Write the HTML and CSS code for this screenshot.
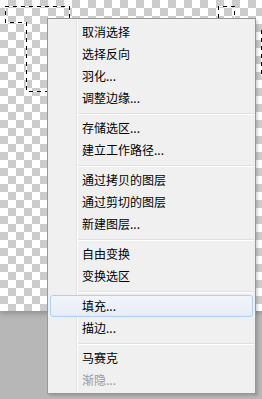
FILE: index.html
```html
<!DOCTYPE html>
<html lang="zh-CN">
<head>
    <meta charset="UTF-8">
    <title>选区菜单</title>
    <link rel="stylesheet" href="styles.css">
</head>
<body>
    <div class="canvas">
        <svg class="ants" width="262" height="311" viewBox="0 0 262 311">
            <g fill="none" stroke="#ffffff" stroke-width="1" shape-rendering="crispEdges">
                <path d="M69.5 18 V6.5 H5.5 V22.5 H26.5 V91.5 H48"/>
                <path d="M218.5 18 V6.5 H234.5 V18"/>
                <path d="M261.5 30 V76"/>
            </g>
            <g fill="none" stroke="#000000" stroke-width="1" stroke-dasharray="4 4" shape-rendering="crispEdges">
                <path d="M69.5 18 V6.5 H5.5 V22.5 H26.5 V91.5 H48"/>
                <path d="M218.5 18 V6.5 H234.5 V18"/>
                <path d="M261.5 30 V76"/>
            </g>
        </svg>
    </div>

    <ul class="menu">
        <li class="item">取消选择</li>
        <li class="item">选择反向</li>
        <li class="item">羽化...</li>
        <li class="item">调整边缘...</li>
        <li class="sep"></li>
        <li class="item">存储选区...</li>
        <li class="item">建立工作路径...</li>
        <li class="sep"></li>
        <li class="item">通过拷贝的图层</li>
        <li class="item">通过剪切的图层</li>
        <li class="item">新建图层...</li>
        <li class="sep"></li>
        <li class="item">自由变换</li>
        <li class="item">变换选区</li>
        <li class="sep"></li>
        <li class="item hover">填充...</li>
        <li class="item">描边...</li>
        <li class="sep"></li>
        <li class="item">马赛克</li>
        <li class="item disabled">渐隐...</li>
    </ul>
</body>
</html>
```

FILE: styles.css
```css
body {
    margin: 0;
    width: 262px;
    height: 399px;
    overflow: hidden;
    background-color: #b7b7b7;
    font-family: "Noto Sans CJK SC", "DejaVu Sans", sans-serif;
    font-size: 12px;
    color: #000000;
}

.canvas {
    position: relative;
    height: 311px;
    background-color: #ffffff;
    background-image:
        linear-gradient(45deg, #cccccc 25%, transparent 25%, transparent 75%, #cccccc 75%),
        linear-gradient(45deg, #cccccc 25%, transparent 25%, transparent 75%, #cccccc 75%);
    background-size: 16px 16px;
    background-position: 0 0, 8px 8px;
    box-shadow: 0 2px 6px rgba(0, 0, 0, 0.25);
}

.ants {
    position: absolute;
    left: 0;
    top: 0;
}

.menu {
    position: absolute;
    left: 47px;
    top: 18px;
    width: 209px;
    box-sizing: border-box;
    margin: 0;
    padding: 2px 0;
    list-style: none;
    border: 1px solid #979797;
    background-color: #f0f0f0;
    background-image: linear-gradient(to right,
        #f0f0f0 28px, #e2e3e3 28px, #e2e3e3 29px,
        #ffffff 29px, #ffffff 30px, #f0f0f0 30px);
    box-shadow: 2px 2px 2px rgba(0, 0, 0, 0.15);
}

.item {
    height: 20px;
    line-height: 20px;
    margin: 0 2px;
    padding-left: 31px;
    border: 1px solid transparent;
    border-radius: 3px;
    white-space: nowrap;
}

.item.hover {
    border-color: #aecff7;
    background: linear-gradient(#f2f6fb, #e6ecf6);
}

.item.disabled {
    color: #9a9a9a;
}

.sep {
    height: 8px;
    margin: 0 1px 0 30px;
    background: linear-gradient(#f0f0f0 4px, #e0e0e0 4px, #e0e0e0 5px, #ffffff 5px, #ffffff 6px, #f0f0f0 6px);
}
```
